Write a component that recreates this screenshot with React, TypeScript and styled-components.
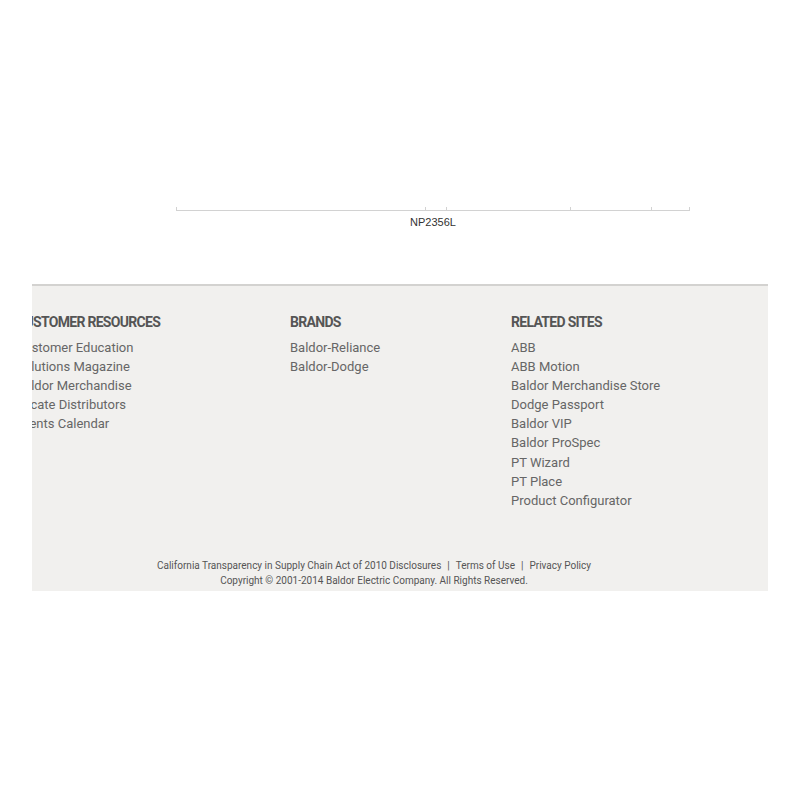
import styled, { createGlobalStyle } from 'styled-components'

const GlobalStyle = createGlobalStyle`
    html, body {
        margin: 0;
        padding: 0;
        background: #ffffff;
    }
    body {
        font-family: Roboto, 'Liberation Sans', Arial, sans-serif;
    }
`

const Page = styled.div`
    width: 800px;
    min-height: 800px;
    background: #ffffff;
`

const ChartArea = styled.div`
    height: 284px;
    padding: 197px 0 0 174px;
    box-sizing: border-box;
`

const AxisLabel = styled.div`
    width: 518px;
    text-align: center;
    margin-top: 0;
    font-family: 'Liberation Sans', Arial, sans-serif;
    font-size: 11px;
    color: #333;
`

const Footer = styled.footer`
    margin: 0 32px;
    height: 307px;
    box-sizing: border-box;
    background: #f1f0ee;
    border-top: 2px solid #d3d2d0;
    overflow: hidden;
    display: flex;
    flex-direction: column;
`

const Columns = styled.div`
    display: grid;
    grid-template-columns: 274px 221px 1fr;
    margin-left: -16px;
    padding-top: 28px;
    height: 252px;
    box-sizing: border-box;
`

const Column = styled.div`
    display: flex;
    flex-direction: column;
`

const Heading = styled.div`
    font-size: 14px;
    font-weight: 700;
    color: #555;
    text-transform: uppercase;
    letter-spacing: -0.7px;
    line-height: 17px;
    margin-bottom: 7px;
    white-space: nowrap;
`

const Link = styled.a`
    font-size: 13px;
    line-height: 19.1px;
    color: #666;
    text-decoration: none;
    white-space: nowrap;
`

const Legal = styled.div`
    padding-top: 20px;
    padding-right: 52px;
    text-align: center;
    font-size: 10px;
    line-height: 15px;
    color: #555;
`

const Sep = styled.span`
    margin: 0 6px;
`

const ticks = [0, 249, 270, 394, 475, 513]

const Axis = () => (
    <svg width="520" height="8" viewBox="0 0 520 8">
        <line x1="2" y1="6.5" x2="515" y2="6.5" stroke="#d2d2d2" strokeWidth="1" />
        {ticks.map((t) => (
            <line key={t} x1={t + 2.5} y1="3" x2={t + 2.5} y2="7" stroke="#d2d2d2" strokeWidth="1" />
        ))}
    </svg>
)

const columns = [
    {
        title: 'Customer Resources',
        links: ['Customer Education', 'Solutions Magazine', 'Baldor Merchandise', 'Locate Distributors', 'Events Calendar'],
    },
    {
        title: 'Brands',
        links: ['Baldor-Reliance', 'Baldor-Dodge'],
    },
    {
        title: 'Related Sites',
        links: [
            'ABB',
            'ABB Motion',
            'Baldor Merchandise Store',
            'Dodge Passport',
            'Baldor VIP',
            'Baldor ProSpec',
            'PT Wizard',
            'PT Place',
            'Product Configurator',
        ],
    },
]

const App = () => {
    return (
        <Page>
            <GlobalStyle />
            <ChartArea>
                <Axis />
                <AxisLabel>{'NP2356L'}</AxisLabel>
            </ChartArea>

            <Footer>
                <Columns>
                    {columns.map((col) => (
                        <Column key={col.title}>
                            <Heading>{col.title}</Heading>
                            {col.links.map((l) => (
                                <Link key={l} href="#">{l}</Link>
                            ))}
                        </Column>
                    ))}
                </Columns>
                <Legal>
                    {'California Transparency in Supply Chain Act of 2010 Disclosures'}
                    <Sep>{'|'}</Sep>
                    {'Terms of Use'}
                    <Sep>{'|'}</Sep>
                    {'Privacy Policy'}
                    <br />
                    {'Copyright © 2001-2014 Baldor Electric Company. All Rights Reserved.'}
                </Legal>
            </Footer>
        </Page>
    )
}

export default App
